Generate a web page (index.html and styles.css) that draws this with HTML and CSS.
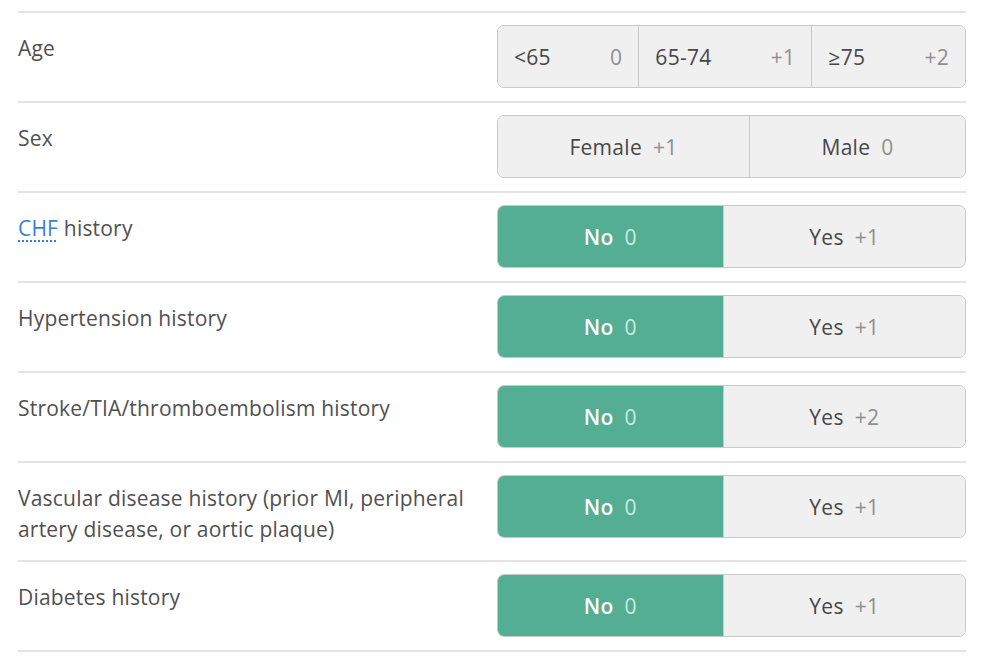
FILE: index.html
```html
<!DOCTYPE html>
<html>
<head>
<meta charset="utf-8">
<link rel="stylesheet" href="styles.css">
</head>
<body>
<div class="calc">
  <div class="row">
    <div class="label">Age</div>
    <div class="group">
      <div class="opt split"><span class="name">&lt;65</span><span class="pts">0</span></div>
      <div class="opt split"><span class="name">65-74</span><span class="pts">+1</span></div>
      <div class="opt split"><span class="name">≥75</span><span class="pts">+2</span></div>
    </div>
  </div>
  <div class="row">
    <div class="label">Sex</div>
    <div class="group">
      <div class="opt"><span class="name">Female</span><span class="pts">+1</span></div>
      <div class="opt"><span class="name">Male</span><span class="pts">0</span></div>
    </div>
  </div>
  <div class="row">
    <div class="label"><span class="abbr">CHF</span> history</div>
    <div class="group">
      <div class="opt on"><span class="name">No</span><span class="pts">0</span></div>
      <div class="opt"><span class="name">Yes</span><span class="pts">+1</span></div>
    </div>
  </div>
  <div class="row">
    <div class="label">Hypertension history</div>
    <div class="group">
      <div class="opt on"><span class="name">No</span><span class="pts">0</span></div>
      <div class="opt"><span class="name">Yes</span><span class="pts">+1</span></div>
    </div>
  </div>
  <div class="row">
    <div class="label">Stroke/TIA/thromboembolism history</div>
    <div class="group">
      <div class="opt on"><span class="name">No</span><span class="pts">0</span></div>
      <div class="opt"><span class="name">Yes</span><span class="pts">+2</span></div>
    </div>
  </div>
  <div class="row">
    <div class="label">Vascular disease history (prior MI, peripheral artery disease, or aortic plaque)</div>
    <div class="group">
      <div class="opt on"><span class="name">No</span><span class="pts">0</span></div>
      <div class="opt"><span class="name">Yes</span><span class="pts">+1</span></div>
    </div>
  </div>
  <div class="row last">
    <div class="label">Diabetes history</div>
    <div class="group">
      <div class="opt on"><span class="name">No</span><span class="pts">0</span></div>
      <div class="opt"><span class="name">Yes</span><span class="pts">+1</span></div>
    </div>
  </div>
</div>
</body>
</html>
```
FILE: styles.css
```css
html, body {
  margin: 0;
  padding: 0;
  background: #ffffff;
}
body {
  font-family: "Open Sans", "Noto Sans", sans-serif;
  color: #4d4d4d;
}
.calc {
  margin: 11px 0 0 18px;
  width: 948px;
}
.row {
  display: flex;
  align-items: flex-start;
  border-top: 2px solid #e3e3e3;
  padding: 12px 0 13px;
}
.row.last {
  border-bottom: 2px solid #e3e3e3;
}
.label {
  flex: 1;
  padding: 8px 20px 2px 0;
  font-size: 21px;
  letter-spacing: 0.2px;
  line-height: 31px;
  color: #505050;
}
.abbr {
  color: #3b7fd0;
  text-decoration: underline dotted #3b7fd0;
  text-underline-offset: 4px;
  text-decoration-thickness: 2px;
}
.group {
  width: 469px;
  flex: none;
  display: flex;
  height: 63px;
  box-sizing: border-box;
  border: 1px solid #c9c9c9;
  border-radius: 7px;
  overflow: hidden;
  background: #f0f0f0;
}
.opt {
  flex: 1 1 auto;
  display: flex;
  align-items: center;
  justify-content: center;
  font-size: 21px;
  letter-spacing: 0.3px;
  color: #474747;
  background: #f0f0f0;
  padding: 0 16px;
}
.opt + .opt {
  border-left: 1px solid #c9c9c9;
}
.opt.split {
  justify-content: space-between;
}
.pts {
  color: #8f8f8f;
  margin-left: 11px;
}
.opt.on {
  background: #53ae93;
  color: #ffffff;
  font-weight: 600;
}
.opt.on .pts {
  color: #c9ece0;
  font-weight: 400;
}
```
